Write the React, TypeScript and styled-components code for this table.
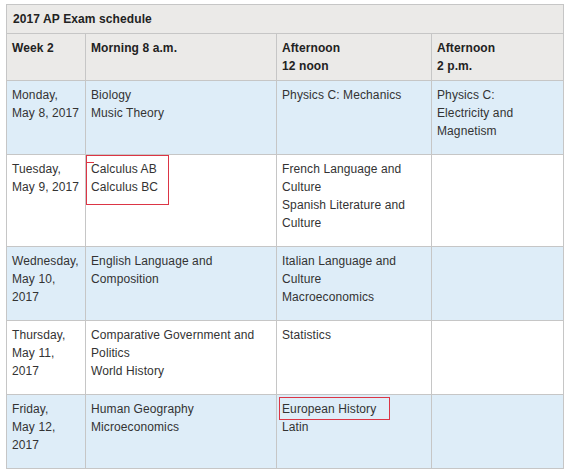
import React from "react";
import styled, { createGlobalStyle } from "styled-components";

const Global = createGlobalStyle`
  html, body { margin: 0; padding: 0; background: #ffffff; }
  body { font-family: "Liberation Sans", Arial, sans-serif; }
`;

const Page = styled.div`
  padding: 4px 0 0 6px;
`;

const Table = styled.table`
  border-collapse: collapse;
  table-layout: fixed;
  width: 558px;
  font-size: 12px;
  line-height: 18px;
  letter-spacing: 0.1px;
  color: #333333;
`;

const TitleCell = styled.th`
  background: #ebeae8;
  border: 1px solid #c6c6c6;
  padding: 5px 6px 5px 6px;
  height: 18px;
  text-align: left;
  font-weight: bold;
  color: #222222;
`;

const HeadCell = styled.th`
  background: #ebeae8;
  border: 1px solid #c6c6c6;
  padding: 5px 6px 5px 5px;
  text-align: left;
  vertical-align: top;
  font-weight: bold;
  color: #222222;
`;

const Row = styled.tr<{ $shaded: boolean }>`
  background: ${(p) => (p.$shaded ? "#deedf8" : "#ffffff")};
`;

const Cell = styled.td<{ $nowrap?: boolean }>`
  position: relative;
  border: 1px solid #c6c6c6;
  padding: 5px 6px 14px 5px;
  vertical-align: top;
  white-space: ${(p) => (p.$nowrap ? "nowrap" : "normal")};
`;

const Highlight = styled.span<{ $l: number; $t: number; $w: number; $h: number }>`
  position: absolute;
  z-index: 1;
  left: ${(p) => p.$l}px;
  top: ${(p) => p.$t}px;
  width: ${(p) => p.$w - 2}px;
  height: ${(p) => p.$h - 2}px;
  border: 1px solid #dc3545;
  pointer-events: none;
`;

const Tick = styled.span`
  position: absolute;
  left: 0;
  top: 6px;
  width: 7px;
  height: 1px;
  background: #dc3545;
`;

type RowData = {
  day: React.ReactNode;
  morning: React.ReactNode;
  noon: React.ReactNode;
  pm: React.ReactNode;
  morningMark?: boolean;
  noonMark?: boolean;
};

const rows: RowData[] = [
  {
    day: <>Monday,<br />May 8, 2017</>,
    morning: <>Biology<br />Music Theory</>,
    noon: <>Physics C: Mechanics</>,
    pm: <>Physics C:<br />Electricity and<br />Magnetism</>,
  },
  {
    day: <>Tuesday,<br />May 9, 2017</>,
    morning: <>Calculus AB<br />Calculus BC</>,
    noon: <>French Language and<br />Culture<br />Spanish Literature and<br />Culture</>,
    pm: null,
    morningMark: true,
  },
  {
    day: <>Wednesday,<br />May 10,<br />2017</>,
    morning: <>English Language and<br />Composition</>,
    noon: <>Italian Language and<br />Culture<br />Macroeconomics</>,
    pm: null,
  },
  {
    day: <>Thursday,<br />May 11,<br />2017</>,
    morning: <>Comparative Government and<br />Politics<br />World History</>,
    noon: <>Statistics</>,
    pm: null,
  },
  {
    day: <>Friday,<br />May 12,<br />2017</>,
    morning: <>Human Geography<br />Microeconomics</>,
    noon: <>European History<br />Latin</>,
    pm: null,
    noonMark: true,
  },
];

export default function App() {
  return (
    <>
      <Global />
      <Page>
        <Table>
          <colgroup>
            <col style={{ width: 79 }} />
            <col style={{ width: 191 }} />
            <col style={{ width: 155 }} />
            <col style={{ width: 132 }} />
          </colgroup>
          <thead>
            <tr>
              <TitleCell colSpan={4}>2017 AP Exam schedule</TitleCell>
            </tr>
            <tr>
              <HeadCell>Week 2</HeadCell>
              <HeadCell>Morning 8 a.m.</HeadCell>
              <HeadCell>Afternoon<br />12 noon</HeadCell>
              <HeadCell>Afternoon<br />2 p.m.</HeadCell>
            </tr>
          </thead>
          <tbody>
            {rows.map((r, i) => (
              <Row key={i} $shaded={i % 2 === 0}>
                <Cell $nowrap>{r.day}</Cell>
                <Cell>
                  {r.morning}
                  {r.morningMark && (
                    <Highlight $l={0} $t={0} $w={83} $h={50}>
                      <Tick />
                    </Highlight>
                  )}
                </Cell>
                <Cell>
                  {r.noon}
                  {r.noonMark && <Highlight $l={2} $t={2} $w={111} $h={23} />}
                </Cell>
                <Cell $nowrap>{r.pm}</Cell>
              </Row>
            ))}
          </tbody>
        </Table>
      </Page>
    </>
  );
}
